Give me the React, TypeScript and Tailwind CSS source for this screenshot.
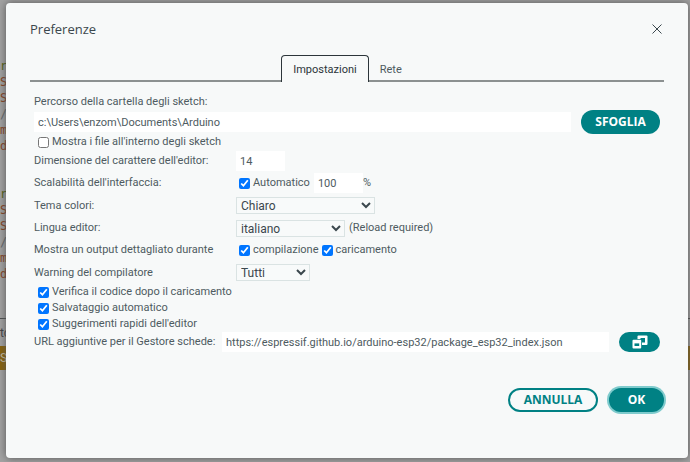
import React, { useState } from 'react';

const EDITOR_LINES = [
  { text: 'r', color: 'text-[#4e5f10]' },
  { text: 'S', color: 'text-[#85401c]' },
  { text: 'S', color: 'text-[#85401c]' },
  { text: '/', color: 'text-[#5f6668]' },
  { text: 'm', color: 'text-[#85401c]' },
  { text: 'd', color: 'text-[#85401c]' },
];

const EditorBackdrop: React.FC = () => (
  <div aria-hidden="true" className="absolute inset-0 flex flex-col overflow-hidden bg-[#a3a3a3]">
    <div className="h-[318px] shrink-0 pt-[58px] font-['DejaVu_Sans_Mono',monospace] text-xs">
      {[0, 1].map((block) => (
        <div key={block} className="pb-8">
          {EDITOR_LINES.map((line, i) => (
            <div key={i} className={`h-4 leading-4 ${line.color}`}>
              {line.text}
            </div>
          ))}
        </div>
      ))}
    </div>
    <div className="h-7 shrink-0 border-t border-[#4a4d4e] text-xs leading-7 text-[#3c4043]">to</div>
    <div className="h-6 shrink-0 bg-[#896209] text-xs leading-6 text-[#c9c0a8]">Se</div>
  </div>
);

interface CheckProps {
  label: string;
  defaultChecked?: boolean;
}

const Check: React.FC<CheckProps> = ({ label, defaultChecked = true }) => (
  <label className="flex items-center gap-[3px]">
    <input type="checkbox" defaultChecked={defaultChecked} className="h-[11px] w-[11px]" />
    {label}
  </label>
);

interface FieldRowProps {
  label: string;
  htmlFor?: string;
  children: React.ReactNode;
}

const FieldRow: React.FC<FieldRowProps> = ({ label, htmlFor, children }) => (
  <div className="flex items-center">
    <label htmlFor={htmlFor} className="w-[202px] shrink-0 whitespace-nowrap">
      {label}
    </label>
    <div className="flex items-center">{children}</div>
  </div>
);

const inputClass = 'h-5 min-w-0 bg-white px-1 text-[#4e5b61] outline-none';
const selectClass = 'h-[17px] border border-[#dae3e3] bg-[#f8fafa] text-xs text-[#3b474d] outline-none';
const buttonClass = "h-6 shrink-0 rounded-full font-['Open_Sans',sans-serif] text-xs font-bold";

const BoardsIcon: React.FC = () => (
  <svg width="16" height="14" viewBox="0 0 16 14" aria-hidden="true">
    <rect x="5.5" y="0.5" width="10" height="9.5" rx="1" fill="#fff" />
    <rect x="8.5" y="3" width="4.5" height="4.5" fill="#008184" />
    <rect x="0" y="4" width="10" height="10" rx="1.5" fill="#008184" />
    <rect x="0.5" y="4.8" width="8.7" height="8.7" rx="1" fill="#fff" />
    <rect x="2.5" y="8.4" width="4.7" height="2.6" fill="#008184" />
  </svg>
);

export default function App() {
  const [tab, setTab] = useState('settings');

  return (
    <div className="relative flex min-h-screen flex-col pt-[3px] pr-0.5 pb-1 pl-1.5 font-[Roboto,sans-serif]">
      <EditorBackdrop />

      <div
        role="dialog"
        aria-labelledby="title"
        className="relative flex flex-1 flex-col rounded-sm bg-[#f7f9f9] px-6 pt-4 pb-[46px] text-[11px] leading-4 text-[#4e5b61] shadow-[0_0_8px_#555]"
      >
        <div className="flex items-center justify-between">
          <h1 id="title" className="font-['Open_Sans',sans-serif] text-[13px] leading-5 text-[#3b474d]">
            Preferenze
          </h1>
          <button aria-label="Chiudi" className="p-0.5">
            <svg width="10" height="10" viewBox="0 0 10 10" stroke="#3b474d" strokeWidth="1" aria-hidden="true">
              <path d="M.5.5l9 9M9.5.5l-9 9" />
            </svg>
          </button>
        </div>

        {/* Tabs */}
        <div role="tablist" className="mt-4 flex h-[27px]">
          <div className="flex-1 border-b-2 border-[#8c9191]" />
          <button
            role="tab"
            aria-selected={tab === 'settings'}
            onClick={() => setTab('settings')}
            className="rounded-t border border-b-0 border-[#2c353a] px-[11px] pt-0.5 text-[#2c353a]"
          >
            Impostazioni
          </button>
          <button
            role="tab"
            aria-selected={tab === 'network'}
            onClick={() => setTab('network')}
            className="border-b-2 border-[#8c9191] px-[11px] pt-1"
          >
            Rete
          </button>
          <div className="flex-1 border-b-2 border-[#8c9191]" />
        </div>

        <div className="mt-3 pr-1 pl-1">
          <label htmlFor="path" className="block">
            Percorso della cartella degli sketch:
          </label>
          <div className="flex h-6 items-center gap-[10px]">
            <input id="path" className={`${inputClass} flex-1`} defaultValue="c:\Users\enzom\Documents\Arduino" />
            <button className={`${buttonClass} w-[79px] bg-[#008184] text-white`}>SFOGLIA</button>
          </div>
          <div className="pl-1">
            <Check label="Mostra i file all'interno degli sketch" defaultChecked={false} />
          </div>

          <div className="grid h-[134px] grid-rows-6">
            <FieldRow label="Dimensione del carattere dell'editor:" htmlFor="size">
              <input id="size" className={`${inputClass} w-[49px]`} defaultValue="14" />
            </FieldRow>
            <FieldRow label="Scalabilità dell'interfaccia:" htmlFor="scale">
              <div className="pr-1 pl-[3px]">
                <Check label="Automatico" />
              </div>
              <input id="scale" className={`${inputClass} w-[49px]`} defaultValue="100" />
              <span>%</span>
            </FieldRow>
            <FieldRow label="Tema colori:" htmlFor="theme">
              <select id="theme" className={`${selectClass} w-[139px]`}>
                <option>Chiaro</option>
              </select>
            </FieldRow>
            <FieldRow label="Lingua editor:" htmlFor="lang">
              <select id="lang" className={`${selectClass} w-[109px]`}>
                <option>italiano</option>
              </select>
              <span className="pl-1">(Reload required)</span>
            </FieldRow>
            <FieldRow label="Mostra un output dettagliato durante">
              <div className="flex gap-[3px] pl-[3px]">
                <Check label="compilazione" />
                <Check label="caricamento" />
              </div>
            </FieldRow>
            <FieldRow label="Warning del compilatore" htmlFor="warnings">
              <select id="warnings" className={`${selectClass} w-[74px]`}>
                <option>Tutti</option>
              </select>
            </FieldRow>
          </div>

          <div className="pl-1">
            <Check label="Verifica il codice dopo il caricamento" />
            <Check label="Salvataggio automatico" />
            <Check label="Suggerimenti rapidi dell'editor" />
          </div>

          <div className="flex items-center">
            <label htmlFor="urls" className="w-[188px] shrink-0 whitespace-nowrap">
              URL aggiuntive per il Gestore schede:
            </label>
            <input
              id="urls"
              className={`${inputClass} flex-1`}
              defaultValue="https://espressif.github.io/arduino-esp32/package_esp32_index.json"
            />
            <button
              aria-label="Modifica URL"
              className="ml-[10px] flex h-5 w-[41px] items-center justify-center rounded-full bg-[#008184]"
            >
              <BoardsIcon />
            </button>
          </div>
        </div>

        <div className="mt-auto flex justify-end gap-[11px]">
          <button className={`${buttonClass} w-[90px] border-2 border-[#008184] text-[#008184]`}>ANNULLA</button>
          <button className={`${buttonClass} w-[55px] bg-[#008184] text-white ring-2 ring-[#7fcbcd]`}>OK</button>
        </div>
      </div>
    </div>
  );
}
